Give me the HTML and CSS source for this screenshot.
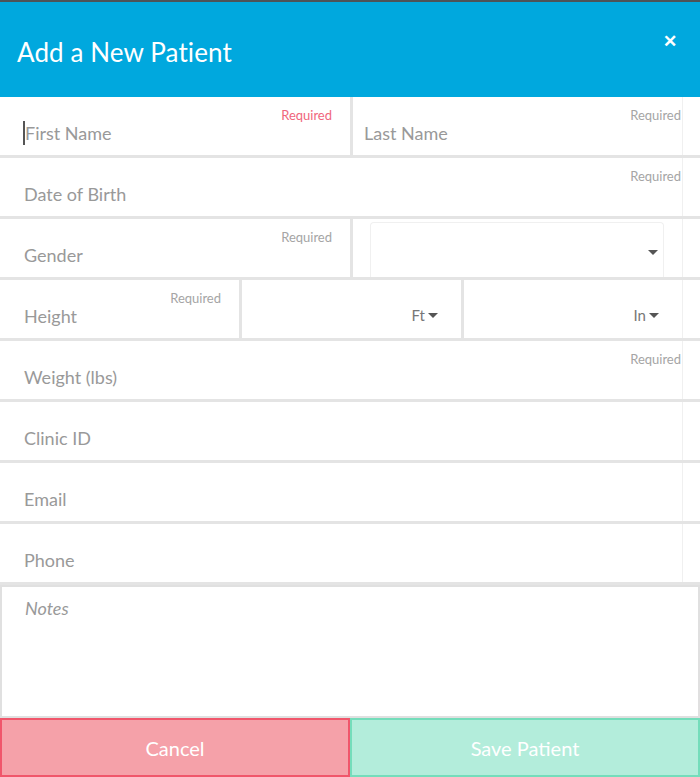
FILE: index.html
```
<!DOCTYPE html>
<html>
<head>
<meta charset="utf-8">
<link rel="stylesheet" href="styles.css">
</head>
<body>
<div class="modal">
  <header class="header">
    <h1 class="title">Add a New Patient</h1>
    <span class="close">&#x2715;</span>
  </header>
  <form class="form">
    <div class="row">
      <div class="field half sep focused">
        <span class="caret"></span>
        <span class="ph">First Name</span>
        <span class="req req-alert">Required</span>
      </div>
      <div class="field last">
        <span class="ph">Last Name</span>
        <span class="req">Required</span>
      </div>
    </div>
    <div class="row">
      <div class="field last wide">
        <span class="ph">Date of Birth</span>
        <span class="req">Required</span>
      </div>
    </div>
    <div class="row">
      <div class="field half sep">
        <span class="ph">Gender</span>
        <span class="req">Required</span>
      </div>
      <div class="selwrap">
        <div class="select"><span class="arrow"></span></div>
      </div>
    </div>
    <div class="row">
      <div class="field third sep">
        <span class="ph">Height</span>
        <span class="req">Required</span>
      </div>
      <div class="field unit sep">
        <span class="unitlabel">Ft</span><span class="arrow"></span>
      </div>
      <div class="field unit last">
        <span class="unitlabel">In</span><span class="arrow"></span>
      </div>
    </div>
    <div class="row">
      <div class="field last wide">
        <span class="ph">Weight (lbs)</span>
        <span class="req">Required</span>
      </div>
    </div>
    <div class="row">
      <div class="field last wide"><span class="ph">Clinic ID</span></div>
    </div>
    <div class="row">
      <div class="field last wide"><span class="ph">Email</span></div>
    </div>
    <div class="row">
      <div class="field last wide"><span class="ph">Phone</span></div>
    </div>
    <div class="notes"><span class="notes-ph">Notes</span></div>
    <div class="buttons">
      <button type="button" class="btn cancel">Cancel</button>
      <button type="button" class="btn save">Save Patient</button>
    </div>
  </form>
</div>
</body>
</html>
```
FILE: styles.css
```
* { box-sizing: border-box; }
html, body {
  margin: 0;
  padding: 0;
  background: #ffffff;
  font-family: Lato, "Open Sans", sans-serif;
}
.modal {
  width: 700px;
  height: 777px;
  display: flex;
  flex-direction: column;
  background: #fff;
}
.header {
  flex: none;
  height: 97px;
  background: #00a8de;
  border-top: 2px solid #4d5358;
  display: flex;
  align-items: center;
  justify-content: space-between;
  padding: 4px 23px 0 17px;
}
.title {
  margin: 0;
  color: #fff;
  font-weight: 400;
  font-size: 26px;
  letter-spacing: 0.1px;
}
.close {
  color: #fff;
  font-size: 17px;
  font-weight: 700;
  align-self: flex-start;
  margin-top: 24px;
}
.form {
  display: flex;
  flex-direction: column;
  flex: 1;
  min-height: 0;
}
.row {
  flex: none;
  height: 61px;
  display: flex;
  border-bottom: 3px solid #e4e4e4;
}
.field {
  position: relative;
  height: 100%;
  background: #fff;
  display: flex;
  align-items: flex-end;
  padding: 0 18px 11px 24px;
}
.half { width: 353px; }
.third { width: 242px; }
.sep { border-right: 3px solid #e4e4e4; }
.last {
  flex: 1;
  max-width: 330px;
  border-right: 1px solid #f0f0f0;
  padding-left: 11px;
}
.wide { max-width: 683px; padding-left: 24px; }
.last .req { right: 1px; }
.unit {
  width: 222px;
  flex: none;
  justify-content: flex-end;
  align-items: center;
  padding: 12px 23px 0 0;
}
.unit.last { width: 219px; flex: none; padding-right: 23px; }
.ph {
  color: #999;
  font-size: 18px;
  line-height: 22px;
}
.req {
  position: absolute;
  top: 10px;
  right: 18px;
  font-size: 13px;
  color: #a5a5a5;
}
.req-alert { color: #f0667c; }
.caret {
  position: absolute;
  left: 23px;
  top: 24px;
  width: 2px;
  height: 24px;
  background: #555;
}
.focused .ph { margin-left: 1px; }
.selwrap {
  flex: 1;
  max-width: 330px;
  padding: 3px 18px 0 17px;
  background: #fff;
  border-right: 1px solid #f0f0f0;
}
.select {
  height: 100%;
  border: 1px solid #f0f0f0;
  border-bottom: none;
  border-radius: 4px 4px 0 0;
  display: flex;
  align-items: center;
  justify-content: flex-end;
  padding: 4px 5px 0 0;
}
.unitlabel {
  color: #777;
  font-size: 15px;
  margin-right: 3px;
}
.arrow {
  width: 0;
  height: 0;
  border-left: 5px solid transparent;
  border-right: 5px solid transparent;
  border-top: 5px solid #555;
}
.notes {
  flex: 1;
  border: 2px solid #e0e0e0;
  padding: 10px 23px;
}
.notes-ph {
  color: #999;
  font-style: italic;
  font-size: 18px;
}
.buttons {
  flex: none;
  display: flex;
  height: 59px;
}
.btn {
  flex: 1;
  font-family: Lato, "Open Sans", sans-serif;
  font-size: 20px;
  color: #fff;
  margin: 0;
  padding: 0;
  cursor: pointer;
}
.cancel {
  background: #f5a1a9;
  border: 2px solid #f0566b;
}
.save {
  background: #b3eddb;
  border: 2px solid #74ddbb;
}
```
